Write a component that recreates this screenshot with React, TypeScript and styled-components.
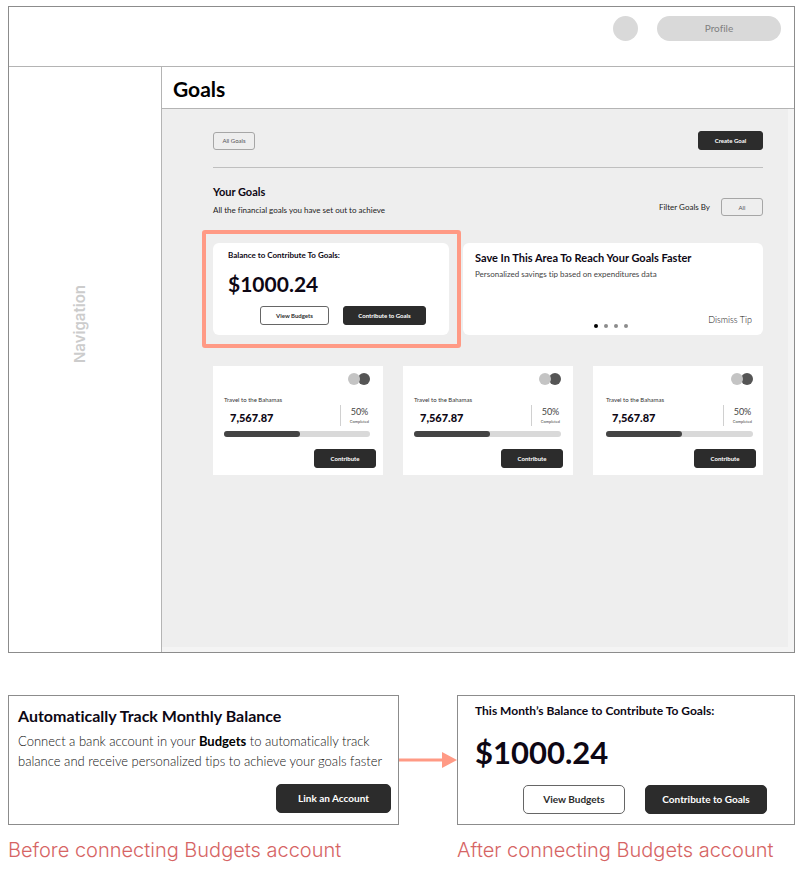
import React from "react";
import styled, { createGlobalStyle } from "styled-components";

const ink = "#0d0714";
const dark = "#2c2c2c";
const line = "#8c8c8c";
const coral = "#ff9a85";

const GlobalStyle = createGlobalStyle`
  * { box-sizing: border-box; }
  body {
    margin: 0;
    background: #fff;
    color: ${ink};
    font-family: Lato, "Noto Sans", sans-serif;
    font-variant-ligatures: none;
  }
  h1, h2, h3, p { margin: 0; }
  button, select { font-family: inherit; font-variant-ligatures: none; margin: 0; padding: 0; }
`;

const Page = styled.div`
  padding: 6px 14px 8px 8px;
`;

const Frame = styled.div`
  display: flex;
  flex-direction: column;
  min-height: 647px;
  border: 1px solid ${line};
`;

const Header = styled.header`
  display: flex;
  justify-content: flex-end;
  align-items: flex-start;
  gap: 19px;
  height: 60px;
  padding: 9px 13px 0 0;
  border-bottom: 1px solid #b4b4b4;
`;

const Avatar = styled.span`
  width: 25px;
  height: 25px;
  border-radius: 50%;
  background: #d9d9d9;
`;

const ProfileButton = styled.button`
  width: 124px;
  height: 25px;
  border: 0;
  border-radius: 13px;
  background: #d9d9d9;
  color: #808080;
  font-size: 10px;
  line-height: 25px;
`;

const Shell = styled.div`
  flex: 1;
  display: flex;
`;

const Sidebar = styled.nav`
  display: flex;
  justify-content: center;
  align-items: center;
  width: 153px;
  flex: none;
  padding: 0 10px 70px 0;
  border-right: 1px solid #b4b4b4;
  color: #ccc;
  font: 600 15px/20px Inter, sans-serif;
`;

const VerticalLabel = styled.span`
  writing-mode: vertical-rl;
  transform: rotate(180deg);
`;

const Main = styled.main`
  flex: 1;
  min-width: 0;
  display: flex;
  flex-direction: column;
`;

const PageTitle = styled.h1`
  height: 42px;
  padding: 2px 0 0 11px;
  border-bottom: 1px solid #b4b4b4;
  color: #000;
  font-size: 21px;
  line-height: 40px;
`;

const Gutter = styled.div`
  flex: 1;
  display: flex;
  padding: 0 6px 5px 0;
  background: #f4f4f4;
`;

const Workspace = styled.div`
  flex: 1;
  min-width: 0;
  padding: 22px 25px 0 51px;
  background: #eee;
`;

const Toolbar = styled.div`
  display: flex;
  justify-content: space-between;
  align-items: center;
  padding-bottom: 17px;
  border-bottom: 1px solid #bfbfbf;
`;

const Button = styled.button<{ $width: number; $outline?: boolean; $large?: boolean }>`
  width: ${(p) => p.$width}px;
  height: ${(p) => (p.$large ? 29 : 19)}px;
  border: 1px solid ${(p) => (p.$outline ? "#666" : dark)};
  border-radius: ${(p) => (p.$large ? 5 : 3)}px;
  background: ${(p) => (p.$outline ? "#fff" : dark)};
  color: ${(p) => (p.$outline ? dark : "#fff")};
  font-size: ${(p) => (p.$large ? 10 : 6)}px;
  line-height: ${(p) => (p.$large ? 27 : 17)}px;
  font-weight: 700;
`;

const GhostButton = styled.button`
  width: 42px;
  height: 18px;
  border: 1px solid #a6a6a6;
  border-radius: 3px;
  background: transparent;
  color: #555;
  font-size: 6px;
  line-height: 16px;
`;

const SectionHead = styled.div`
  display: flex;
  justify-content: space-between;
  align-items: flex-end;
  margin-top: 17px;
`;

const SectionTitle = styled.h2`
  font-size: 11px;
  line-height: 14px;
`;

const SectionNote = styled.p`
  margin-top: 5px;
  color: #222;
  font-size: 8px;
  line-height: 12px;
`;

const FilterLabel = styled.label`
  display: flex;
  align-items: center;
  gap: 11px;
  color: #222;
  font-size: 8px;
  line-height: 12px;
`;

const FilterSelect = styled.select`
  appearance: none;
  width: 42px;
  height: 18px;
  border: 1px solid #a6a6a6;
  border-radius: 3px;
  background: transparent;
  color: #555;
  font-size: 6px;
  text-align: center;
  text-align-last: center;
`;

const Highlights = styled.div`
  display: grid;
  grid-template-columns: minmax(0, 236fr) minmax(0, 300fr);
  gap: 14px;
  margin-top: 27px;
`;

const Panel = styled.section`
  position: relative;
  display: flex;
  flex-direction: column;
  min-height: 92px;
  border-radius: 6px;
  background: #fff;
`;

const BalancePanel = styled(Panel)`
  padding: 7px 23px 10px 15px;
`;

const TipPanel = styled(Panel)`
  padding: 7px 11px 7px 12px;
`;

const FocusRing = styled.div`
  position: absolute;
  inset: -13px -12px -13px -11px;
  border: 4px solid ${coral};
  border-radius: 3px;
  pointer-events: none;
`;

const PanelLabel = styled.h3<{ $large?: boolean }>`
  font-size: ${(p) => (p.$large ? 12 : 8)}px;
  line-height: ${(p) => (p.$large ? 16 : 10)}px;
`;

const Amount = styled.p<{ $large?: boolean }>`
  margin-top: ${(p) => (p.$large ? 15 : 12)}px;
  font-size: ${(p) => (p.$large ? 31 : 21)}px;
  line-height: ${(p) => (p.$large ? 36 : 24)}px;
  font-weight: 700;
`;

const Actions = styled.div<{ $gap?: number }>`
  display: flex;
  justify-content: flex-end;
  gap: ${(p) => p.$gap ?? 0}px;
  margin-top: auto;
`;

const TipTitle = styled.h3`
  font-size: 11px;
  line-height: 16px;
`;

const TipText = styled.p`
  margin-top: 2px;
  color: #444;
  font-size: 8px;
  line-height: 12px;
`;

const TipFooter = styled.div`
  display: grid;
  grid-template-columns: 1fr auto 1fr;
  align-items: end;
  margin-top: auto;
`;

const Dots = styled.div`
  grid-column: 2;
  display: flex;
  gap: 6px;
  padding-right: 6px;
`;

const Dot = styled.button<{ $active?: boolean }>`
  width: 4px;
  height: 4px;
  border: 0;
  border-radius: 50%;
  background: ${(p) => (p.$active ? "#000" : "#8c8c8c")};
`;

const TextButton = styled.button`
  justify-self: end;
  border: 0;
  background: none;
  color: #111;
  font-size: 9px;
  font-weight: 300;
  line-height: 16px;
`;

const GoalGrid = styled.div`
  display: grid;
  grid-template-columns: repeat(3, minmax(0, 1fr));
  gap: 20px;
  margin-top: 31px;
  isolation: isolate;
`;

const GoalPanel = styled.article<{ $start: number; $end: number }>`
  padding: 7px ${(p) => p.$end}px 7px ${(p) => p.$start}px;
  background: #fff;
`;

const Swatches = styled.div`
  display: flex;
  justify-content: flex-end;
`;

const Swatch = styled.span<{ $front?: boolean }>`
  position: relative;
  z-index: ${(p) => (p.$front ? 1 : 0)};
  width: 12px;
  height: 12px;
  margin-right: ${(p) => (p.$front ? -2 : 0)}px;
  border-radius: 50%;
  background: ${(p) => (p.$front ? "#c4c4c4" : "#555")};
`;

const GoalName = styled.h3`
  margin-top: 10px;
  color: #333;
  font-size: 6px;
  font-weight: 400;
  line-height: 10px;
`;

const Stats = styled.div`
  display: flex;
  justify-content: space-between;
  align-items: center;
  height: 21px;
`;

const Saved = styled.p`
  padding: 5px 0 0 6px;
  color: ${ink};
  font-size: 11px;
  line-height: 14px;
  font-weight: 900;
`;

const Completion = styled.div`
  display: flex;
  flex-direction: column;
  align-items: center;
  width: 30px;
  height: 21px;
  padding: 1px 0 0 8px;
  border-left: 1px solid #d0d0d0;
  color: #444;
  font-size: 9px;
  line-height: 12px;
`;

const Caption = styled.span`
  font-size: 4px;
  line-height: 7px;
`;

const Track = styled.div`
  height: 6px;
  margin-top: 5px;
  border-radius: 3px;
  background: #d9d9d9;
`;

const Fill = styled.div`
  height: 100%;
  border-radius: 3px;
  background: #444;
`;

const GoalAction = styled.div<{ $shift: number }>`
  display: flex;
  justify-content: flex-end;
  margin: 12px ${(p) => -p.$shift}px 0 0;
`;

const Comparison = styled.div`
  display: grid;
  grid-template-columns: minmax(0, 391fr) 58px minmax(0, 338fr);
  margin-top: 42px;
`;

const Box = styled.section<{ $kind: "before" | "after" }>`
  display: flex;
  flex-direction: column;
  min-height: 130px;
  padding: ${(p) => (p.$kind === "before" ? "10px 7px 11px 9px" : "7px 27px 10px 17px")};
  border: 1px solid ${line};
  background: #fff;
`;

const BoxTitle = styled.h2`
  font-size: 16px;
  line-height: 20px;
`;

const BoxText = styled.p`
  margin-top: 5px;
  color: #111;
  font-size: 13px;
  font-weight: 300;
  line-height: 20px;

  strong {
    color: #000;
    font-weight: 700;
  }
`;

const Arrow = styled.svg`
  align-self: center;
  display: block;
  width: 58px;
  height: 18px;
`;

const Note = styled.p`
  margin-top: 13px;
  color: #d66464;
  font: 300 20px/24px Inter, sans-serif;
  white-space: nowrap;
`;

const NoteAfter = styled(Note)`
  grid-column: 3;
`;

const goals = [
  { id: 1, start: 11, end: 13, shift: 6 },
  { id: 2, start: 11, end: 12, shift: 2 },
  { id: 3, start: 13, end: 10, shift: 3 },
];

type Goal = (typeof goals)[number];

function GoalCard({ goal }: { goal: Goal }) {
  const progress = 52;
  return (
    <GoalPanel $start={goal.start} $end={goal.end}>
      <Swatches>
        <Swatch $front />
        <Swatch />
      </Swatches>
      <GoalName>Travel to the Bahamas</GoalName>
      <Stats>
        <Saved>7,567.87</Saved>
        <Completion>
          50%
          <Caption>Completed</Caption>
        </Completion>
      </Stats>
      <Track role="progressbar" aria-label="Goal progress" aria-valuenow={50} aria-valuemin={0} aria-valuemax={100}>
        <Fill style={{ width: `${progress}%` }} />
      </Track>
      <GoalAction $shift={goal.shift}>
        <Button $width={62}>Contribute</Button>
      </GoalAction>
    </GoalPanel>
  );
}

export default function App() {
  return (
    <>
      <GlobalStyle />
      <Page>
        <Frame>
          <Header>
            <Avatar />
            <ProfileButton>Profile</ProfileButton>
          </Header>
          <Shell>
            <Sidebar>
              <VerticalLabel>Navigation</VerticalLabel>
            </Sidebar>
            <Main>
              <PageTitle>Goals</PageTitle>
              <Gutter>
                <Workspace>
                  <Toolbar>
                    <GhostButton>All Goals</GhostButton>
                    <Button $width={65}>Create Goal</Button>
                  </Toolbar>
                  <SectionHead>
                    <div>
                      <SectionTitle>Your Goals</SectionTitle>
                      <SectionNote>All the financial goals you have set out to achieve</SectionNote>
                    </div>
                    <FilterLabel htmlFor="goal-filter">
                      Filter Goals By
                      <FilterSelect id="goal-filter">
                        <option>All</option>
                      </FilterSelect>
                    </FilterLabel>
                  </SectionHead>
                  <Highlights>
                    <BalancePanel>
                      <PanelLabel>Balance to Contribute To Goals:</PanelLabel>
                      <Amount>$1000.24</Amount>
                      <Actions $gap={14}>
                        <Button $width={69} $outline>View Budgets</Button>
                        <Button $width={83}>Contribute to Goals</Button>
                      </Actions>
                      <FocusRing />
                    </BalancePanel>
                    <TipPanel>
                      <TipTitle>Save In This Area To Reach Your Goals Faster</TipTitle>
                      <TipText>Personalized savings tip based on expenditures data</TipText>
                      <TipFooter>
                        <Dots>
                          <Dot $active aria-label="Tip 1" />
                          <Dot aria-label="Tip 2" />
                          <Dot aria-label="Tip 3" />
                          <Dot aria-label="Tip 4" />
                        </Dots>
                        <TextButton>Dismiss Tip</TextButton>
                      </TipFooter>
                    </TipPanel>
                  </Highlights>
                  <GoalGrid>
                    {goals.map((goal) => (
                      <GoalCard key={goal.id} goal={goal} />
                    ))}
                  </GoalGrid>
                </Workspace>
              </Gutter>
            </Main>
          </Shell>
        </Frame>

        <Comparison>
          <Box $kind="before">
            <BoxTitle>Automatically Track Monthly Balance</BoxTitle>
            <BoxText>
              Connect a bank account in your <strong>Budgets</strong> to automatically track
              <br />
              balance and receive personalized tips to achieve your goals faster
            </BoxText>
            <Actions>
              <Button $width={115} $large>Link an Account</Button>
            </Actions>
          </Box>
          <Arrow viewBox="0 0 58 18" aria-hidden="true">
            <path d="M0 9H45" stroke={coral} strokeWidth="3" />
            <path d="M43 1L58 9L43 17Z" fill={coral} />
          </Arrow>
          <Box $kind="after">
            <PanelLabel $large>This Month’s Balance to Contribute To Goals:</PanelLabel>
            <Amount $large>$1000.24</Amount>
            <Actions $gap={20}>
              <Button $width={102} $outline $large>View Budgets</Button>
              <Button $width={122} $large>Contribute to Goals</Button>
            </Actions>
          </Box>
          <Note>Before connecting Budgets account</Note>
          <NoteAfter>After connecting Budgets account</NoteAfter>
        </Comparison>
      </Page>
    </>
  );
}
